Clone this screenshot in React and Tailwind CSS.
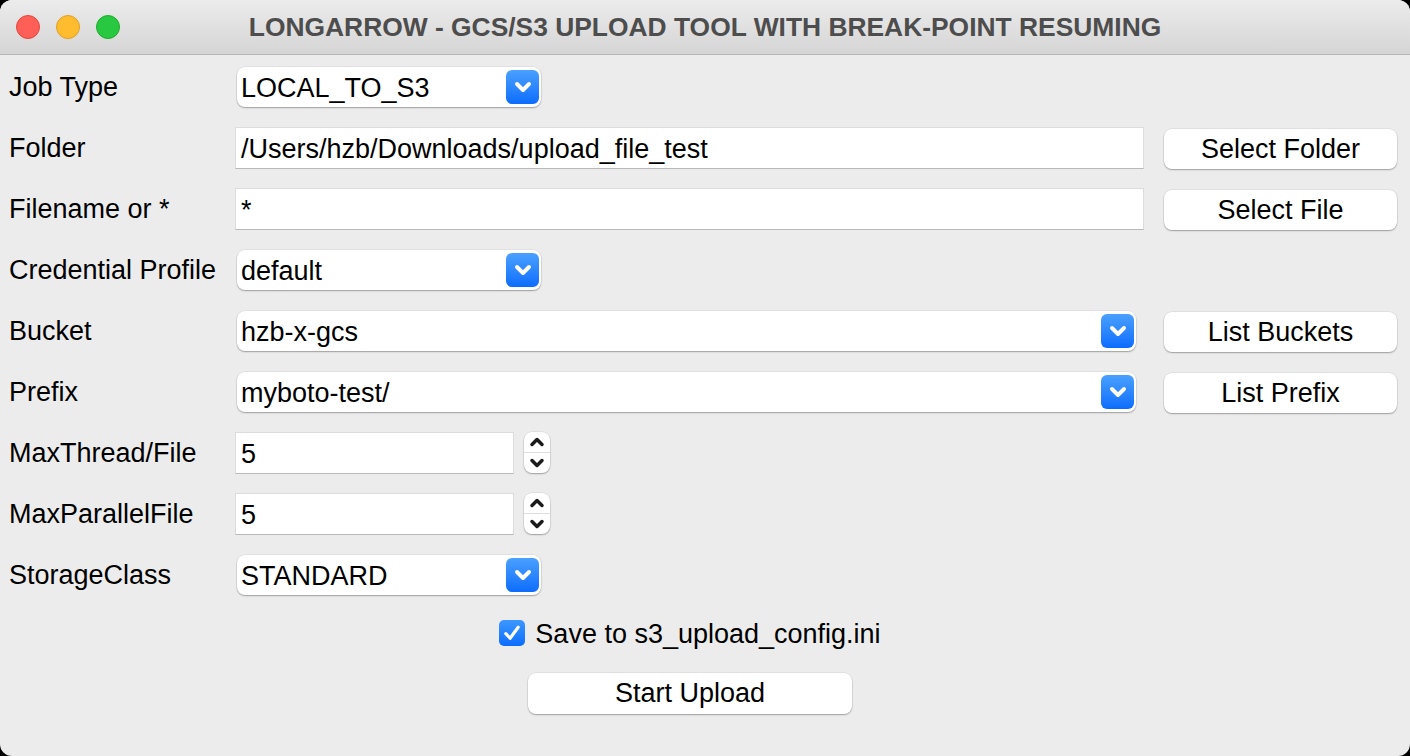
import React from 'react';

const FONT = { fontFamily: '"Liberation Sans", Arial, sans-serif' };

function Chevron({ up = false, className = '', width = 2.4 }) {
  return (
    <svg viewBox="0 0 16 16" className={className} fill="none">
      <path
        d={up ? 'M4 10 L8 6 L12 10' : 'M4 6 L8 10 L12 6'}
        stroke="currentColor"
        strokeWidth={width}
        strokeLinecap="round"
        strokeLinejoin="round"
      />
    </svg>
  );
}

function Select({ value, wide = false }) {
  return (
    <div
      className={`ml-[2px] h-[40px] bg-white rounded-[8px] flex items-center justify-between pl-[4px] pr-[2px] shadow-[0_1px_1.5px_rgba(0,0,0,0.3),0_0_0_0.5px_rgba(0,0,0,0.08)] ${
        wide ? 'flex-1 mr-[28px]' : 'w-[304px]'
      }`}
    >
      <span className="text-[27px] leading-none text-black pt-[3px]">{value}</span>
      <div className="w-[33px] h-[34px] rounded-[6px] bg-gradient-to-b from-[#4aa0ff] to-[#0a6cff] flex items-center justify-center text-white">
        <Chevron className="w-[24px] h-[24px]" width={2.6} />
      </div>
    </div>
  );
}

function TextInput({ value, className = '' }) {
  return (
    <div
      className={`h-[42px] bg-white border border-[#dcdcdc] border-b-[#b9b9b9] flex items-center pl-[5px] ${className}`}
    >
      <span className="text-[27px] leading-none text-black pt-[3px]">{value}</span>
    </div>
  );
}

function Button({ children, className = '' }) {
  return (
    <button
      className={`h-[40px] bg-white rounded-[8px] text-[27px] leading-none text-black shadow-[0_1px_1.5px_rgba(0,0,0,0.3),0_0_0_0.5px_rgba(0,0,0,0.08)] ${className}`}
      style={FONT}
    >
      {children}
    </button>
  );
}

function Spinner() {
  return (
    <div className="ml-[10px] w-[26px] h-[41px] bg-white rounded-[8px] flex flex-col shadow-[0_1px_1.5px_rgba(0,0,0,0.3),0_0_0_0.5px_rgba(0,0,0,0.08)] text-[#1a1a1a]">
      <div className="flex-1 flex items-center justify-center border-b border-[#dedede]">
        <Chevron up className="w-[20px] h-[20px]" width={2.8} />
      </div>
      <div className="flex-1 flex items-center justify-center">
        <Chevron className="w-[20px] h-[20px]" width={2.8} />
      </div>
    </div>
  );
}

function Row({ label, children }) {
  return (
    <div className="h-[61px] flex items-center pl-[9px] pr-[13px]">
      <div className="w-[226px] text-[27px] leading-none text-black pt-[2px]">{label}</div>
      {children}
    </div>
  );
}

export default function App() {
  return (
    <div className="w-[1410px] h-[756px] bg-black" style={FONT}>
      <div className="w-full h-full rounded-[12px] overflow-hidden bg-[#ececec] flex flex-col">
        {/* title bar */}
        <div className="h-[55px] shrink-0 bg-gradient-to-b from-[#ececec] to-[#d5d5d5] border-b border-[#b6b6b6] flex items-center relative">
          <div className="flex items-center gap-[16px] pl-[16px]">
            <span className="w-[24px] h-[24px] rounded-full bg-[#ff5f57] border border-[#e2463f]" />
            <span className="w-[24px] h-[24px] rounded-full bg-[#febc2e] border border-[#dfa024]" />
            <span className="w-[24px] h-[24px] rounded-full bg-[#28c840] border border-[#1dad2b]" />
          </div>
          <div className="absolute inset-0 flex items-center justify-center pointer-events-none">
            <span className="text-[26.4px] font-bold text-[#4d4d4d] leading-none pt-[1px]">
              LONGARROW - GCS/S3 UPLOAD TOOL WITH BREAK-POINT RESUMING
            </span>
          </div>
        </div>

        {/* form */}
        <div className="pt-[1px]">
          <Row label="Job Type">
            <Select value="LOCAL_TO_S3" />
          </Row>
          <Row label="Folder">
            <TextInput value="/Users/hzb/Downloads/upload_file_test" className="flex-1 mr-[20px]" />
            <Button className="w-[233px] mt-[3px]">Select Folder</Button>
          </Row>
          <Row label="Filename or *">
            <TextInput value="*" className="flex-1 mr-[20px]" />
            <Button className="w-[233px] mt-[3px]">Select File</Button>
          </Row>
          <Row label="Credential Profile">
            <Select value="default" />
          </Row>
          <Row label="Bucket">
            <Select value="hzb-x-gcs" wide />
            <Button className="w-[233px] mt-[3px]">List Buckets</Button>
          </Row>
          <Row label="Prefix">
            <Select value="myboto-test/" wide />
            <Button className="w-[233px] mt-[3px]">List Prefix</Button>
          </Row>
          <Row label="MaxThread/File">
            <TextInput value="5" className="w-[279px]" />
            <Spinner />
          </Row>
          <Row label="MaxParallelFile">
            <TextInput value="5" className="w-[279px]" />
            <Spinner />
          </Row>
          <Row label="StorageClass">
            <Select value="STANDARD" />
          </Row>

          <div className="h-[56px] flex items-center justify-center pr-[30px]">
            <div className="w-[26px] h-[26px] rounded-[5px] bg-gradient-to-b from-[#3d97ff] to-[#0a6cff] flex items-center justify-center">
              <svg viewBox="0 0 16 16" className="w-[22px] h-[22px]" fill="none">
                <path d="M3.5 8.5 L6.6 11.8 L12.5 3.8" stroke="white" strokeWidth="2.3" strokeLinecap="round" strokeLinejoin="round" />
              </svg>
            </div>
            <span className="ml-[10px] text-[27px] leading-none text-black pt-[3px]">Save to s3_upload_config.ini</span>
          </div>

          <div className="mt-[12px] flex justify-center pr-[30px]">
            <Button className="w-[324px] h-[41px]">Start Upload</Button>
          </div>
        </div>
      </div>
    </div>
  );
}
